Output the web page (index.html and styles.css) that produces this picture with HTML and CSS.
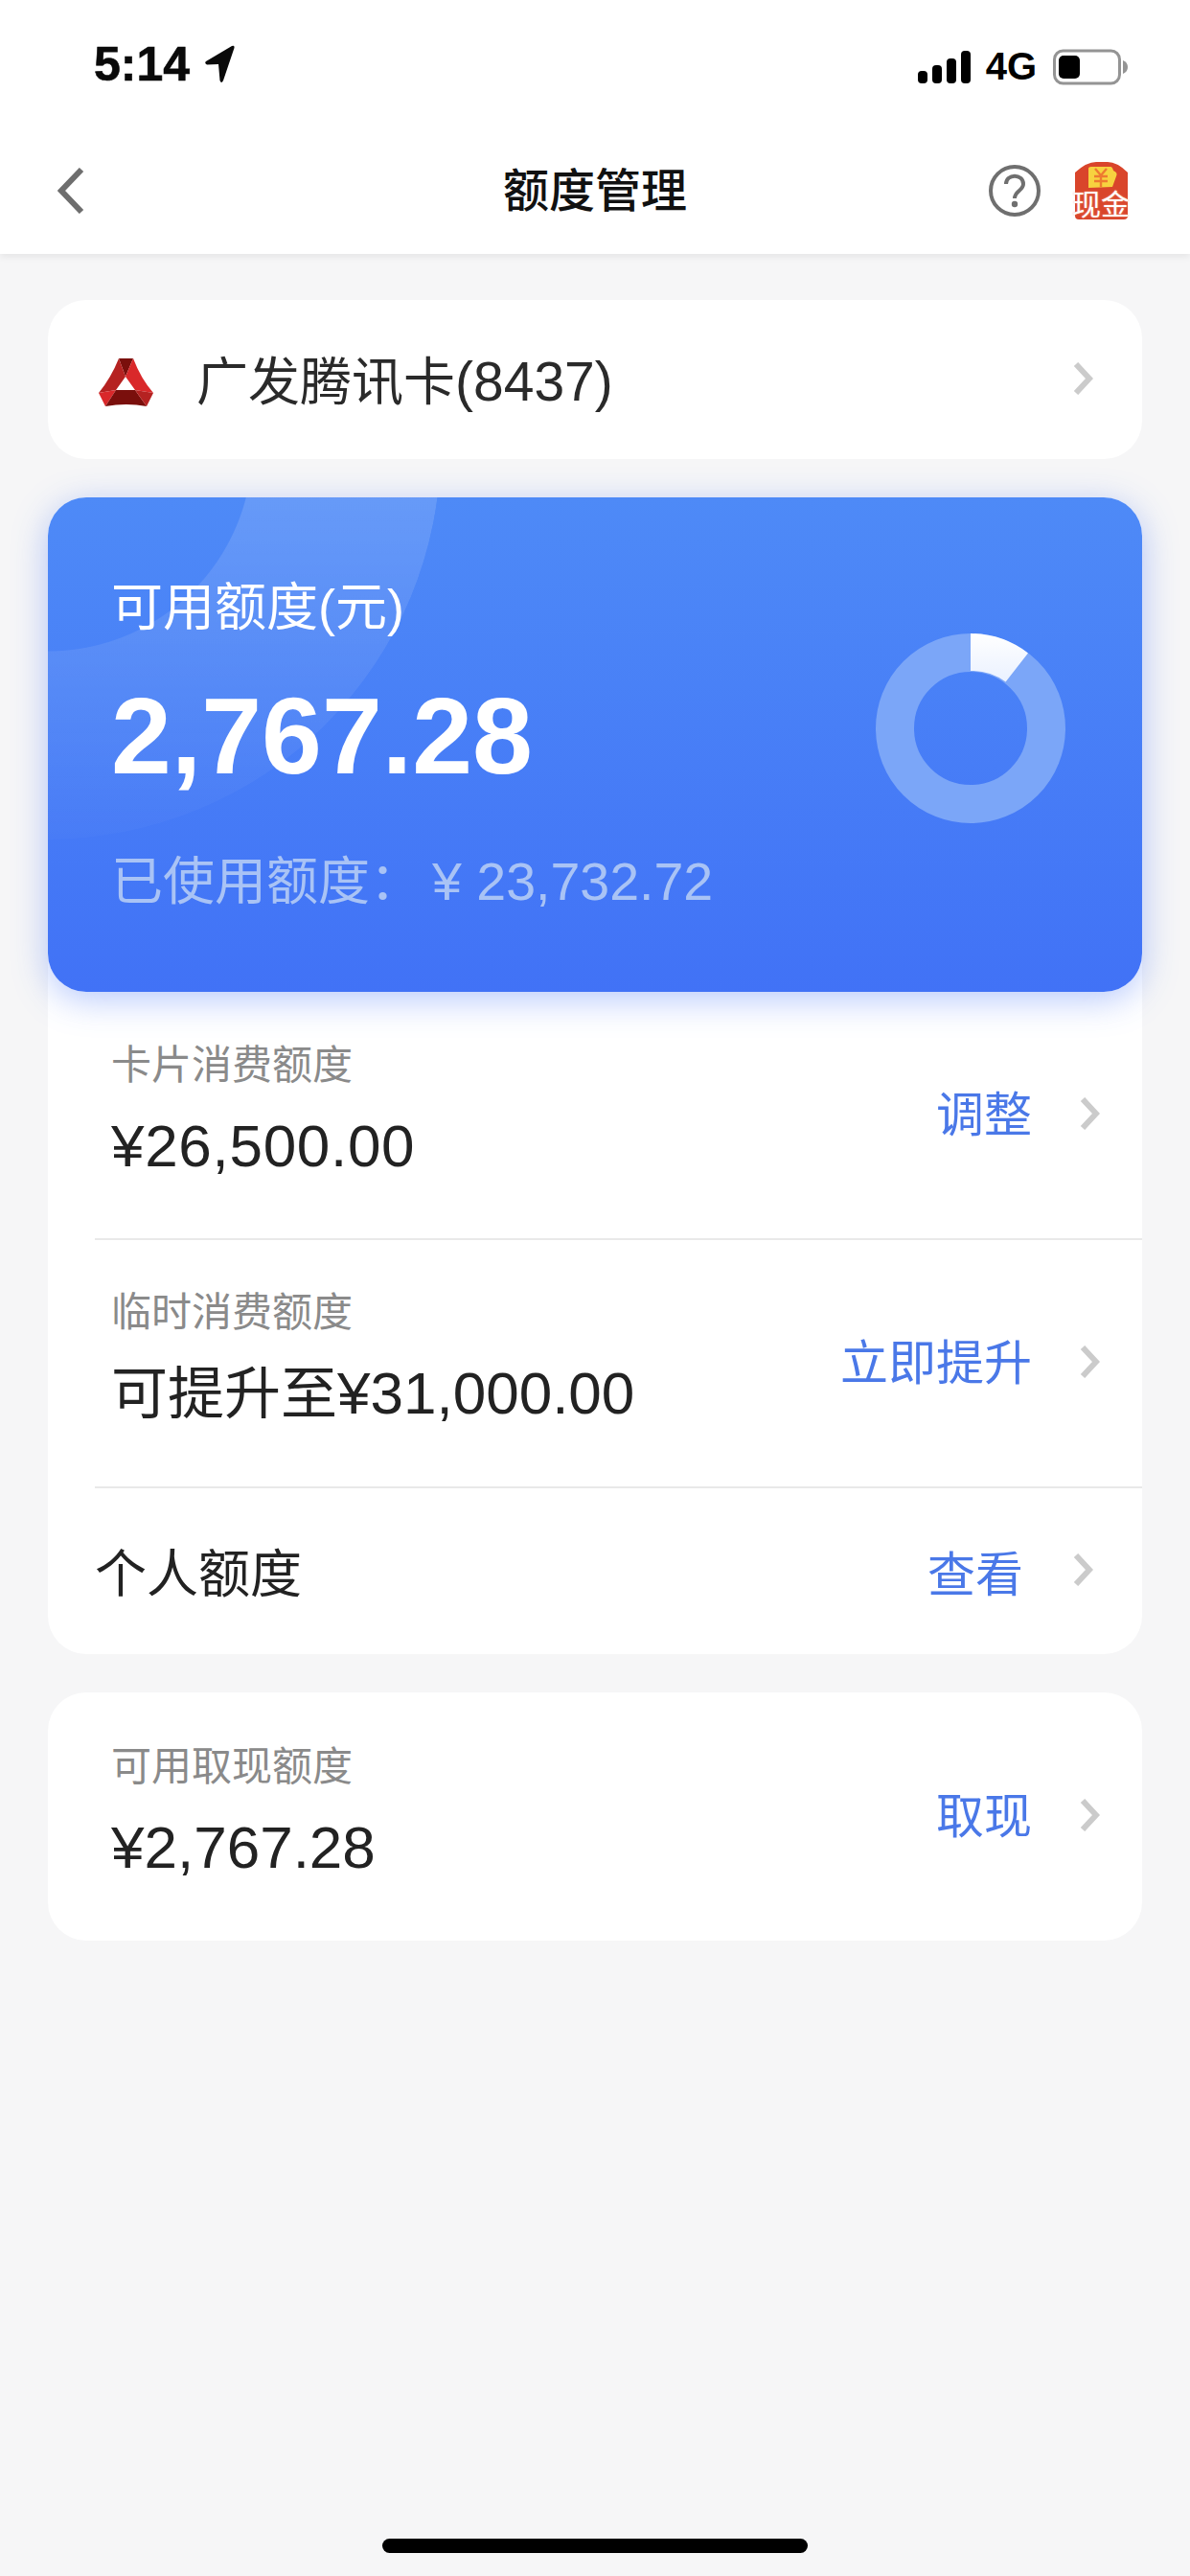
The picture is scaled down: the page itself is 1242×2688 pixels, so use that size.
FILE: index.html
```html
<!DOCTYPE html>
<html lang="en">
<head>
    <meta charset="UTF-8">
    <meta name="viewport" content="width=device-width, initial-scale=1.0">
    <title>额度管理</title>
    <link rel="stylesheet" href="styles.css">
</head>
<body>
<div class="phone">
    <div class="top">
        <div class="status">
            <div class="time">5:14
                <svg class="loc" width="31" height="40" viewBox="0 0 31 40"><path d="M1 17 L28 1 Q31 0 30.5 3 L19 37 Q17 41 15.5 37 L14 20 L2 20.5 Q-1 19 1 17Z" fill="#0a0a0a"/></svg>
            </div>
            <div class="status-right">
                <svg width="56" height="36" viewBox="0 0 56 36"><rect x="1" y="22" width="10" height="13" rx="4" fill="#000"/><rect x="16" y="16" width="10" height="19" rx="4" fill="#000"/><rect x="31" y="9" width="10" height="26" rx="4" fill="#000"/><rect x="46" y="1" width="10" height="34" rx="4" fill="#000"/></svg>
                <span class="net">4G</span>
                <svg width="80" height="38" viewBox="0 0 80 38"><rect x="2.5" y="2" width="68" height="34" rx="9" fill="none" stroke="#949494" stroke-width="3"/><rect x="7" y="7" width="22" height="24" rx="5" fill="#000"/><path d="M74 12 Q79 14 79 19 Q79 24 74 26Z" fill="#949494"/></svg>
            </div>
        </div>
        <div class="nav">
            <svg class="back" width="28" height="48" viewBox="0 0 28 48"><path d="M25 2 L4 24 L25 46" fill="none" stroke="#6e6e6e" stroke-width="6"/></svg>
            <div class="nav-title">额度管理</div>
            <div class="nav-icons">
                <svg width="54" height="54" viewBox="0 0 54 54"><circle cx="27" cy="27" r="25" fill="none" stroke="#6f6f6f" stroke-width="4"/><path d="M18 20 C18 9 36 9 36 20 C36 27 27 27 27 35" fill="none" stroke="#6f6f6f" stroke-width="4"/><circle cx="27" cy="41" r="3.2" fill="#6f6f6f"/></svg>
                <div class="cash">
                    <svg width="58" height="60" viewBox="0 0 58 60"><path d="M2 11 Q14 0 24 0 L36 0 Q46 0 57 11 L57 56 Q57 60 53 60 L6 60 Q2 60 2 56Z" fill="#d9452b"/><path d="M16 7 Q16 5 19 5 L39 5 Q41 5 42 9 Q47 11 45 15 L41 26 L16 27Z" fill="#f7d23f"/><path d="M23 7 L29 14 L35 7 M29 14 V26 M22 15 H36 M22 20 H36" fill="none" stroke="#ee7a30" stroke-width="2.4"/></svg>
                    <span class="cash-text">现金</span>
                </div>
            </div>
        </div>
    </div>

    <div class="content">
        <div class="card bank">
            <svg class="bank-logo" width="58" height="51" viewBox="0 0 58 51">
                <path d="M21 0 H36 L28 19Z" fill="#7a0f0c"/>
                <path d="M21 0 L28 19 L18 33 L0 36 Q13 20 21 0Z" fill="#b52221"/>
                <path d="M36 0 Q44 21 57 36 L38 33 L28 19Z" fill="#d9282a"/>
                <path d="M0 36 L18 33 L7 50Z" fill="#d9282a"/>
                <path d="M18 33 H38 L50 50 Q29 46 7 50Z" fill="#7a0f0c"/>
                <path d="M38 33 L57 36 L50 50Z" fill="#b52221"/>
            </svg>
            <span class="bank-name">广发腾讯卡<span class="num">(8437)</span></span>
            <svg class="chev" width="21" height="34" viewBox="0 0 21 34"><path d="M3 2 L17 17 L3 32" fill="none" stroke="#cbcbcb" stroke-width="6"/></svg>
        </div>

        <div class="quota">
            <div class="blue">
                <div class="arc"></div>
                <div class="blue-text">
                    <div class="avail-label">可用额度(元)</div>
                    <div class="avail-num">2,767.28</div>
                    <div class="used">已使用额度： <span class="used-num">¥ 23,732.72</span></div>
                </div>
                <svg class="ring" width="198" height="198" viewBox="0 0 198 198">
                    <defs>
                        <linearGradient id="seg" x1="0" y1="0" x2="0" y2="1">
                            <stop offset="0" stop-color="#ffffff"/>
                            <stop offset="1" stop-color="#eaf1ff"/>
                        </linearGradient>
                    </defs>
                    <circle cx="99" cy="99" r="79" fill="none" stroke="#7ba6f8" stroke-width="40"/>
                    <path d="M99 0 A99 99 0 0 1 159 20.5 L135.6 50.5 A60 60 0 0 0 99 39Z" fill="url(#seg)"/>
                </svg>
            </div>

            <div class="row">
                <div class="row-main">
                    <div class="small">卡片消费额度</div>
                    <div class="amount amount-wide">¥26,500.00</div>
                </div>
                <span class="link">调整</span>
                <svg class="chev" width="21" height="34" viewBox="0 0 21 34"><path d="M3 2 L17 17 L3 32" fill="none" stroke="#cbcbcb" stroke-width="6"/></svg>
            </div>
            <div class="row">
                <div class="row-main">
                    <div class="small">临时消费额度</div>
                    <div class="amount"><span class="cn">可提升至</span>¥31,000.00</div>
                </div>
                <span class="link">立即提升</span>
                <svg class="chev" width="21" height="34" viewBox="0 0 21 34"><path d="M3 2 L17 17 L3 32" fill="none" stroke="#cbcbcb" stroke-width="6"/></svg>
            </div>
            <div class="row row-last">
                <div class="row-main">个人额度</div>
                <span class="link">查看</span>
                <svg class="chev" width="21" height="34" viewBox="0 0 21 34"><path d="M3 2 L17 17 L3 32" fill="none" stroke="#cbcbcb" stroke-width="6"/></svg>
            </div>
        </div>

        <div class="card cashout">
            <div class="row-main">
                <div class="small">可用取现额度</div>
                <div class="amount">¥2,767.28</div>
            </div>
            <span class="link">取现</span>
            <svg class="chev" width="21" height="34" viewBox="0 0 21 34"><path d="M3 2 L17 17 L3 32" fill="none" stroke="#cbcbcb" stroke-width="6"/></svg>
        </div>
    </div>

    <div class="home-bar"></div>
</div>
</body>
</html>
```

FILE: styles.css
```css
* {
    box-sizing: border-box;
}
html, body {
    margin: 0;
    padding: 0;
}
body {
    font-family: "Liberation Sans", "Noto Sans CJK SC", sans-serif;
    color: #222;
}
.phone {
    width: 1242px;
    height: 2688px;
    background: #f6f6f7;
    position: relative;
    overflow: hidden;
}
.top {
    height: 265px;
    background: #fff;
    box-shadow: 0 3px 7px rgba(0, 0, 0, 0.07);
}
.status {
    height: 132px;
    padding: 44px 64px 0 98px;
    display: flex;
    justify-content: space-between;
    align-items: flex-start;
}
.time {
    display: flex;
    align-items: center;
    gap: 16px;
    font-size: 50px;
    font-weight: bold;
    -webkit-text-stroke: 0.6px #0a0a0a;
    color: #0a0a0a;
    line-height: 46px;
}
.status-right {
    display: flex;
    align-items: center;
    gap: 16px;
    color: #000;
    margin-top: 3px;
}
.net {
    font-size: 40px;
    font-weight: bold;
}
.nav {
    height: 133px;
    padding: 0 64px 0 60px;
    display: flex;
    align-items: center;
    position: relative;
}
.nav-title {
    position: absolute;
    left: 0;
    right: 0;
    top: 36px;
    text-align: center;
    font-size: 48px;
    line-height: 64px;
    font-weight: 500;
    color: #111;
}
.nav-icons {
    margin-left: auto;
    display: flex;
    align-items: center;
    gap: 34px;
}
.cash {
    width: 58px;
    height: 60px;
    position: relative;
}
.cash-text {
    position: absolute;
    left: -1px;
    top: 29px;
    font-size: 30px;
    line-height: 32px;
    color: #fff;
    white-space: nowrap;
    text-shadow: 0 0 2px #f0a080;
}
.content {
    padding: 48px 50px 0;
    display: flex;
    flex-direction: column;
}
.card {
    background: #fff;
    border-radius: 40px;
    display: flex;
    align-items: center;
}
.bank {
    height: 166px;
    padding: 0 51px 0 53px;
}
.bank-logo {
    margin-top: 6px;
}
.bank-name {
    flex: 1;
    margin-left: 44px;
    padding-bottom: 4px;
    font-size: 54px;
    color: #2a2a2a;
}
.num {
    font-size: 57px;
}
.chev {
    flex-shrink: 0;
    margin-bottom: 3px;
}
.quota {
    margin-top: 40px;
    background: #fff;
    border-radius: 40px;
}
.blue {
    height: 516px;
    border-radius: 40px;
    background: linear-gradient(180deg, #4e8af7 0%, #4172f6 100%);
    box-shadow: 0 8px 36px rgba(65, 114, 246, 0.38);
    position: relative;
    overflow: hidden;
    display: flex;
    align-items: flex-start;
    padding: 80px 80px 0 66px;
}
.arc {
    position: absolute;
    left: -410px;
    top: -463px;
    width: 820px;
    height: 820px;
    border-radius: 50%;
    background: linear-gradient(180deg, rgba(255, 255, 255, 0.14) 56%, rgba(255, 255, 255, 0.02) 100%);
    -webkit-mask: radial-gradient(circle at center, transparent 213px, #000 214px);
    mask: radial-gradient(circle at center, transparent 213px, #000 214px);
}
.blue-text {
    flex: 1;
    position: relative;
}
.avail-label {
    font-size: 54px;
    line-height: 70px;
    color: #fff;
}
.avail-num {
    margin-top: 36px;
    font-size: 113px;
    line-height: 126px;
    font-weight: bold;
    color: #fff;
}
.used {
    margin-top: 54px;
    font-size: 54px;
    line-height: 70px;
    color: #a9c3f5;
    white-space: nowrap;
}
.used-num {
    font-size: 55.5px;
    margin-left: -4px;
}
.ring {
    position: relative;
    margin-top: 62px;
}
.row {
    height: 259px;
    margin-left: 49px;
    padding: 0 44px 0 17px;
    display: flex;
    align-items: center;
    border-bottom: 2px solid #e9e9e9;
}
.row-last {
    height: 173px;
    border-bottom: none;
    padding: 0 51px 0 0;
    font-size: 54px;
    color: #222;
}
.row-main {
    flex: 1;
    margin-bottom: 10px;
}
.row-last .row-main {
    margin-bottom: 2px;
}
.small {
    font-size: 42px;
    line-height: 50px;
    color: #8a8a8a;
}
.amount {
    margin-top: 24px;
    font-size: 62px;
    line-height: 70px;
    color: #222;
}
.amount-wide {
    letter-spacing: 0.7px;
}
.cn {
    font-size: 59px;
}
.link {
    font-size: 50px;
    color: #4a78e8;
    margin-right: 50px;
    margin-bottom: 9px;
}
.row-last .link {
    margin-right: 52px;
    margin-bottom: 2px;
}
.cashout {
    margin-top: 40px;
    height: 259px;
    padding: 0 44px 0 66px;
}
.home-bar {
    position: absolute;
    left: 399px;
    top: 2649px;
    width: 444px;
    height: 15px;
    border-radius: 8px;
    background: #000;
}
```
